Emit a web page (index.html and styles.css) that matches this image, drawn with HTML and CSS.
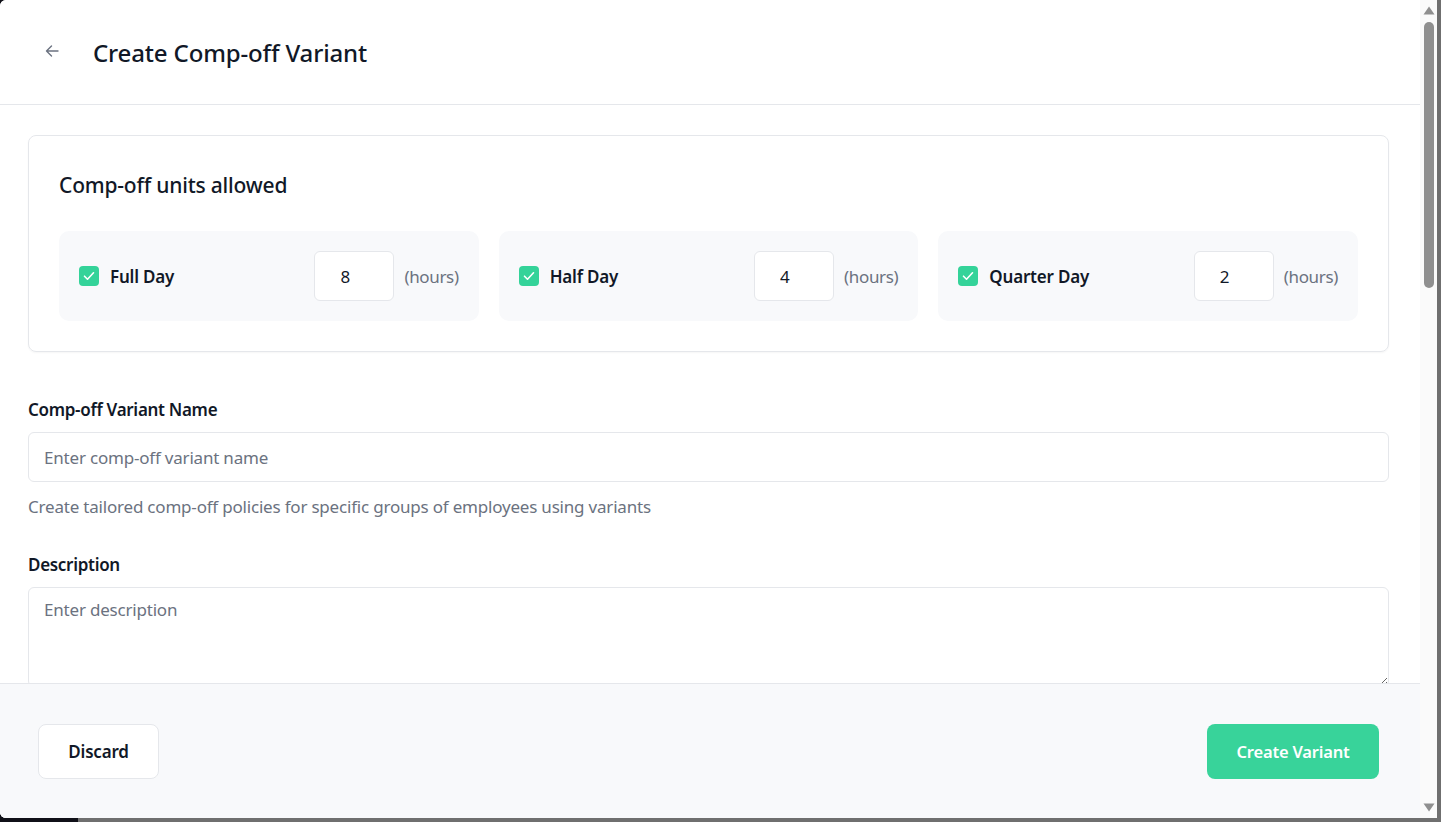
FILE: index.html
```html
<!DOCTYPE html>
<html lang="en">
<head>
<meta charset="utf-8">
<title>Create Comp-off Variant</title>
<link rel="stylesheet" href="styles.css">
</head>
<body>
<div class="window">
  <div class="modal">
    <header class="header">
      <button class="back" aria-label="Back">
        <svg width="16" height="16" viewBox="0 0 16 16" fill="none" stroke="#6b7280" stroke-width="1.4" stroke-linecap="round" stroke-linejoin="round"><path d="M14 8H2.5M7.5 3L2.5 8l5 5"/></svg>
      </button>
      <h1 class="title">Create Comp-off Variant</h1>
    </header>

    <main class="content">
      <section class="card">
        <h2 class="card-title">Comp-off units allowed</h2>
        <div class="units">
          <div class="unit">
            <label class="check"><span class="box"><svg width="12" height="10" viewBox="0 0 12 10" fill="none" stroke="#fff" stroke-width="1.6" stroke-linecap="round" stroke-linejoin="round"><path d="M1.5 5.2l3 3L10.5 1.8"/></svg></span>Full Day</label>
            <div class="hours"><input class="num" type="text" value="8"><span class="unit-label">(hours)</span></div>
          </div>
          <div class="unit">
            <label class="check"><span class="box"><svg width="12" height="10" viewBox="0 0 12 10" fill="none" stroke="#fff" stroke-width="1.6" stroke-linecap="round" stroke-linejoin="round"><path d="M1.5 5.2l3 3L10.5 1.8"/></svg></span>Half Day</label>
            <div class="hours"><input class="num" type="text" value="4"><span class="unit-label">(hours)</span></div>
          </div>
          <div class="unit">
            <label class="check"><span class="box"><svg width="12" height="10" viewBox="0 0 12 10" fill="none" stroke="#fff" stroke-width="1.6" stroke-linecap="round" stroke-linejoin="round"><path d="M1.5 5.2l3 3L10.5 1.8"/></svg></span>Quarter Day</label>
            <div class="hours"><input class="num" type="text" value="2"><span class="unit-label">(hours)</span></div>
          </div>
        </div>
      </section>

      <div class="field">
        <label class="label">Comp-off Variant Name</label>
        <input class="input" type="text" placeholder="Enter comp-off variant name">
        <p class="help">Create tailored comp-off policies for specific groups of employees using variants</p>
      </div>

      <div class="field">
        <label class="label">Description</label>
        <textarea class="textarea" placeholder="Enter description"></textarea>
      </div>
    </main>

    <footer class="footer">
      <button class="btn btn-ghost">Discard</button>
      <button class="btn btn-primary">Create Variant</button>
    </footer>
  </div>

  <div class="scrollbar" aria-hidden="true">
    <svg class="arrow" width="12" height="9" viewBox="0 0 12 9"><path d="M6 0.5L11.5 8.5H0.5z" fill="#8f8f8f"/></svg>
    <div class="track"><div class="thumb"></div></div>
    <svg class="arrow" width="12" height="9" viewBox="0 0 12 9"><path d="M0.5 0.5H11.5L6 8.5z" fill="#8f8f8f"/></svg>
  </div>
</div>
</body>
</html>
```

FILE: styles.css
```css
* { box-sizing: border-box; }
html, body { margin: 0; height: 100%; }
body {
  background: linear-gradient(to right, #101018 78px, #6f6f6f 78px);
  font-family: "Noto Sans", "Open Sans", sans-serif;
  color: #111827;
  overflow: hidden;
}
.window {
  width: 1437px;
  height: 818px;
  display: flex;
  background: #fff;
  border-radius: 6px 0 0 6px;
  overflow: hidden;
}
.modal {
  width: 1420px;
  height: 818px;
  display: flex;
  flex-direction: column;
  background: #fff;
}
.scrollbar {
  width: 17px;
  height: 818px;
  background: #fafafa;
  display: flex;
  flex-direction: column;
  align-items: center;
  padding: 6px 0 6px 1px;
}
.arrow { display: block; flex: none; }
.track {
  flex: 1;
  width: 100%;
  padding: 7px 3px 0 3px;
}
.thumb {
  width: 10px;
  height: 266px;
  margin: 0 auto;
  background: #8f8f8f;
  border-radius: 5px;
}
.header {
  height: 105px;
  flex: none;
  border-bottom: 1px solid #e5e7eb;
  display: flex;
  align-items: center;
  padding-left: 44px;
}
.back {
  background: none;
  border: 0;
  padding: 0;
  width: 16px;
  height: 16px;
  display: flex;
  margin-right: 33px;
  margin-top: -2px;
}
.title {
  margin: 0;
  font-size: 24px;
  font-weight: 500;
  letter-spacing: -0.15px;
  color: #111827;
}
.content {
  flex: 1;
  min-height: 0;
  overflow: hidden;
  padding: 30px 31px 0 28px;
}
.card {
  border: 1px solid #e5e7eb;
  border-radius: 8px;
  padding: 30px;
  box-shadow: 0 1px 2px rgba(0,0,0,0.04);
}
.card-title {
  margin: 2px 0 29px;
  font-size: 21px;
  font-weight: 500;
  line-height: 34px;
  letter-spacing: -0.2px;
}
.units {
  display: grid;
  grid-template-columns: repeat(3, 1fr);
  gap: 20px;
}
.unit {
  background: #f8f9fb;
  border-radius: 10px;
  height: 90px;
  padding: 0 20px;
  display: flex;
  align-items: center;
  justify-content: space-between;
}
.check {
  display: flex;
  align-items: center;
  gap: 11px;
  font-size: 17px;
  font-weight: 600;
  letter-spacing: -0.2px;
}
.box {
  width: 20px;
  height: 20px;
  border-radius: 4px;
  background: #34d399;
  display: flex;
  align-items: center;
  justify-content: center;
}
.hours {
  display: flex;
  align-items: center;
  gap: 10px;
}
.num {
  width: 80px;
  height: 50px;
  border: 1px solid #e5e7eb;
  border-radius: 6px;
  background: #fff;
  padding: 0 0 0 25px;
  font-family: inherit;
  font-size: 17px;
  color: #111827;
  outline: none;
}
.unit-label {
  font-size: 17px;
  color: #6b7280;
  letter-spacing: -0.35px;
}
.field { margin-top: 43px; }
.field + .field { margin-top: 31px; }
.label {
  display: block;
  font-size: 17px;
  font-weight: 600;
  line-height: 30px;
  margin-bottom: 7px;
  letter-spacing: -0.3px;
}
.input, .textarea {
  display: block;
  width: 100%;
  border: 1px solid #e5e7eb;
  border-radius: 6px;
  font-family: inherit;
  font-size: 17px;
  color: #111827;
  padding: 0 15px;
  outline: none;
  letter-spacing: -0.2px;
}
.input { height: 50px; }
.textarea {
  height: 100px;
  padding: 10px 15px;
  resize: vertical;
}
.input::placeholder, .textarea::placeholder { color: #6b7280; }
.help {
  margin: 13px 0 0;
  font-size: 17px;
  line-height: 24px;
  color: #6b7280;
  letter-spacing: -0.2px;
}
.footer {
  flex: none;
  height: 135px;
  background: #f8f9fb;
  border-top: 1px solid #e5e7eb;
  display: flex;
  align-items: center;
  justify-content: space-between;
  padding: 1px 41px 0 38px;
}
.btn {
  height: 55px;
  border-radius: 8px;
  font-family: inherit;
  font-weight: 600;
  letter-spacing: -0.2px;
  cursor: pointer;
}
.btn-ghost {
  width: 121px;
  font-size: 17px;
  background: #fff;
  border: 1px solid #e5e7eb;
  color: #111827;
}
.btn-primary {
  width: 172px;
  font-size: 16.5px;
  background: #38d39a;
  border: 0;
  color: #fff;
}
```
